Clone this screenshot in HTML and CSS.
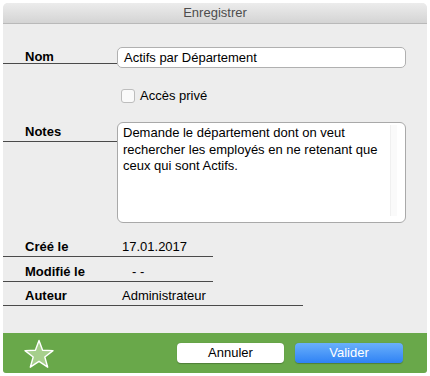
FILE: index.html
```html
<!DOCTYPE html>
<html lang="fr">
<head>
<meta charset="utf-8">
<link rel="stylesheet" href="styles.css">
</head>
<body>
<div class="window">
  <div class="titlebar">Enregistrer</div>
  <div class="content">
    <div class="row row-nom">
      <div class="label lbl-nom">Nom</div>
      <div class="input">Actifs par Département</div>
    </div>
    <div class="row row-check">
      <span class="checkbox"></span>
      <span class="check-text">Accès privé</span>
    </div>
    <div class="row row-notes">
      <div class="label lbl-notes">Notes</div>
      <div class="textarea">
        <div class="ta-text">Demande le département dont on veut rechercher les employés en ne retenant que ceux qui sont Actifs.</div>
        <div class="ta-scroll"></div>
      </div>
    </div>
    <div class="info">
      <div class="info-row short"><span class="info-label">Créé le</span><span class="info-value">17.01.2017</span></div>
      <div class="info-row short"><span class="info-label">Modifié le</span><span class="info-value dash">- -</span></div>
      <div class="info-row long"><span class="info-label">Auteur</span><span class="info-value">Administrateur</span></div>
    </div>
  </div>
  <div class="footer">
    <svg class="star" width="32" height="31" viewBox="0 0 32 31">
      <polygon points="16,1.5 19.6,11.2 30,11.6 21.8,18 24.7,28.2 16,22.3 7.3,28.2 10.2,18 2,11.6 12.4,11.2" fill="#a6cf8c" stroke="#ffffff" stroke-width="1.4" stroke-linejoin="round"/>
    </svg>
    <div class="buttons">
      <div class="btn btn-cancel">Annuler</div>
      <div class="btn btn-ok">Valider</div>
    </div>
  </div>
</div>
</body>
</html>
```

FILE: styles.css
```css
html, body {
  margin: 0;
  padding: 0;
  background: #ffffff;
}
body {
  padding: 3px;
  font-family: "Liberation Sans", Arial, sans-serif;
  font-size: 13px;
  color: #000;
}
.window {
  width: 424px;
  height: 370px;
  border-radius: 5px 5px 3px 3px;
  overflow: hidden;
  background: #ededed;
  display: flex;
  flex-direction: column;
}
.titlebar {
  height: 20px;
  line-height: 20px;
  text-align: center;
  color: #4d4d4d;
  font-size: 13px;
  background: linear-gradient(#ececec, #d4d4d4);
  border-bottom: 1px solid #b9b9b9;
  flex: none;
}
.content {
  flex: 1;
  display: flex;
  flex-direction: column;
}
.row {
  display: flex;
  align-items: flex-start;
}
.label {
  box-sizing: border-box;
  width: 114px;
  padding-left: 22px;
  font-weight: bold;
  border-bottom: 1px solid #4a4a4a;
}
.row-nom {
  margin-top: 23px;
}
.lbl-nom {
  height: 17px;
  line-height: 20px;
}
.input {
  box-sizing: border-box;
  width: 289px;
  height: 21px;
  line-height: 19px;
  padding-left: 6px;
  background: #fff;
  border: 1px solid #b0b0b0;
  border-radius: 5px;
}
.row-check {
  margin-top: 21px;
  padding-left: 118px;
  align-items: center;
  height: 14px;
}
.checkbox {
  box-sizing: border-box;
  width: 14px;
  height: 14px;
  border: 1px solid #bdbdbd;
  border-radius: 3px;
  background: #fafafa;
}
.check-text {
  margin-left: 5px;
  line-height: 14px;
}
.row-notes {
  margin-top: 19px;
}
.lbl-notes {
  height: 20px;
  line-height: 19px;
}
.textarea {
  box-sizing: border-box;
  width: 289px;
  height: 101px;
  background: #fff;
  border: 1px solid #a9a9a9;
  border-radius: 6px;
  display: flex;
  padding: 2px 8px 6px 5px;
}
.ta-text {
  flex: 1;
  line-height: 16.5px;
  padding-right: 8px;
}
.ta-scroll {
  width: 6px;
  background: #fafafa;
  border-left: 1px solid #f0f0f0;
}
.info {
  margin-top: 9px;
}
.info-row {
  box-sizing: border-box;
  height: 25px;
  display: flex;
  align-items: flex-end;
  padding-bottom: 2px;
  padding-left: 22px;
  border-bottom: 1px solid #4a4a4a;
}
.info-row.short { width: 210px; }
.info-row.long { width: 300px; height: 24px; }
.info-label {
  width: 97px;
  font-weight: bold;
}
.info-value.dash {
  padding-left: 10px;
}
.footer {
  flex: none;
  height: 40px;
  background: #69a84a;
  display: flex;
  align-items: center;
  padding: 0 24px 0 20px;
}
.star {
  display: block;
  margin-top: 2px;
}
.buttons {
  margin-left: auto;
  display: flex;
  gap: 11px;
}
.btn {
  box-sizing: border-box;
  height: 20px;
  line-height: 20px;
  text-align: center;
  border-radius: 4px;
  font-size: 13px;
}
.btn-cancel {
  width: 107px;
  background: #fff;
  color: #000;
  box-shadow: 0 0.5px 1px rgba(0,0,0,0.25);
}
.btn-ok {
  width: 108px;
  color: #fff;
  background: linear-gradient(#6ab0fb, #2f82f5);
  box-shadow: 0 0.5px 1px rgba(0,0,0,0.25);
}
```
